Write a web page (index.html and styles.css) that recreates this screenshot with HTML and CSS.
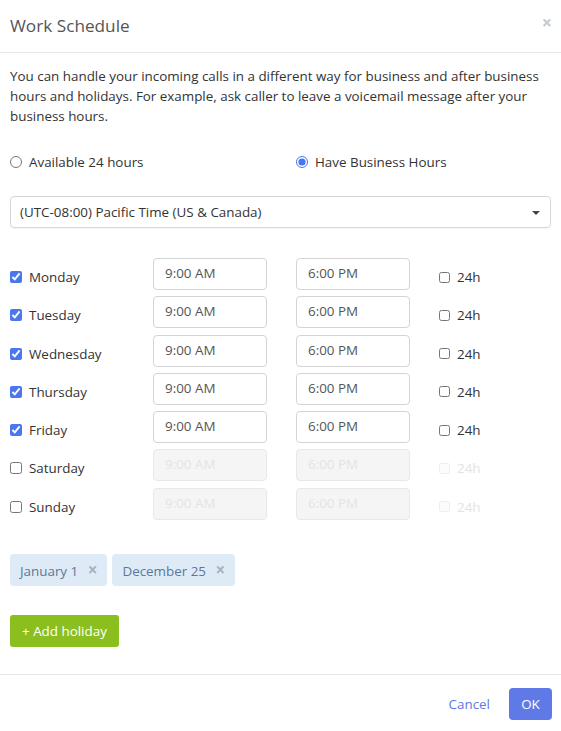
FILE: index.html
```html
<!DOCTYPE html>
<html>
<head>
<meta charset="utf-8">
<link rel="stylesheet" href="styles.css">
</head>
<body>
<div class="modal">
  <div class="modal-header">
    <h1 class="title">Work Schedule</h1>
    <span class="close">&times;</span>
  </div>
  <div class="modal-body">
    <p class="intro">You can handle your incoming calls in a different way for business and after business hours and holidays. For example, ask caller to leave a voicemail message after your business hours.</p>
    <div class="radios">
      <label class="radio"><input type="radio" name="mode"> Available 24 hours</label>
      <label class="radio"><input type="radio" name="mode" checked> Have Business Hours</label>
    </div>
    <div class="select">
      <span>(UTC-08:00) Pacific Time (US &amp; Canada)</span>
      <span class="caret"></span>
    </div>
    <div class="days">
      <label class="day"><input type="checkbox" checked> Monday</label>
      <div class="time">9:00 AM</div><div class="time">6:00 PM</div>
      <label class="h24"><input type="checkbox"> 24h</label>

      <label class="day"><input type="checkbox" checked> Tuesday</label>
      <div class="time">9:00 AM</div><div class="time">6:00 PM</div>
      <label class="h24"><input type="checkbox"> 24h</label>

      <label class="day"><input type="checkbox" checked> Wednesday</label>
      <div class="time">9:00 AM</div><div class="time">6:00 PM</div>
      <label class="h24"><input type="checkbox"> 24h</label>

      <label class="day"><input type="checkbox" checked> Thursday</label>
      <div class="time">9:00 AM</div><div class="time">6:00 PM</div>
      <label class="h24"><input type="checkbox"> 24h</label>

      <label class="day"><input type="checkbox" checked> Friday</label>
      <div class="time">9:00 AM</div><div class="time">6:00 PM</div>
      <label class="h24"><input type="checkbox"> 24h</label>

      <label class="day"><input type="checkbox"> Saturday</label>
      <div class="time disabled">9:00 AM</div><div class="time disabled">6:00 PM</div>
      <label class="h24 disabled"><input type="checkbox" disabled> 24h</label>

      <label class="day"><input type="checkbox"> Sunday</label>
      <div class="time disabled">9:00 AM</div><div class="time disabled">6:00 PM</div>
      <label class="h24 disabled"><input type="checkbox" disabled> 24h</label>
    </div>
    <div class="tags">
      <span class="tag">January 1 <span class="x">&times;</span></span>
      <span class="tag">December 25 <span class="x">&times;</span></span>
    </div>
    <button class="add">+ Add holiday</button>
  </div>
  <div class="modal-footer">
    <button class="cancel">Cancel</button>
    <button class="ok">OK</button>
  </div>
</div>
</body>
</html>
```
FILE: styles.css
```css
* { box-sizing: border-box; }
html, body { margin: 0; padding: 0; background: #fff; }
body {
  font-family: "Open Sans", "Liberation Sans", sans-serif;
  font-size: 13.4px;
  color: #333;
}
.modal { width: 561px; }
.modal-header {
  height: 53px;
  border-bottom: 1px solid #e8e8e8;
  display: flex;
  align-items: flex-start;
  justify-content: space-between;
  padding: 14px 10px 0 10px;
}
.title {
  margin: 0;
  font-size: 17.2px;
  font-weight: 400;
  color: #555;
  line-height: 24px;
}
.close {
  color: #c8c8c8;
  font-size: 18px;
  font-weight: 700;
  line-height: 16px;
  margin-top: 0;
  margin-right: -1px;
}
.modal-body { padding: 13px 10px 27px 10px; }
.intro {
  margin: 0;
  line-height: 20px;
}
.radios {
  display: grid;
  grid-template-columns: 286px 1fr;
  margin-top: 26px;
  height: 20px;
}
.radio {
  display: flex;
  align-items: center;
  gap: 7px;
  line-height: 20px;
}
input[type=radio], input[type=checkbox] {
  margin: 0;
  width: 12px;
  height: 12px;
  accent-color: #4a77f0;
}
.select {
  margin-top: 24px;
  height: 32px;
  border: 1px solid #d6d6d6;
  border-radius: 4px;
  display: flex;
  align-items: center;
  justify-content: space-between;
  padding: 0 10px 0 9px;
  box-shadow: 0 1px 1px rgba(0,0,0,0.04);
}
.caret {
  width: 0; height: 0;
  border-left: 4px solid transparent;
  border-right: 4px solid transparent;
  border-top: 4px solid #444;
  margin-top: 1px;
}
.days {
  margin-top: 30px;
  display: grid;
  grid-template-columns: 114px 114px 114px auto;
  column-gap: 29px;
  row-gap: 6.3px;
}
.day, .h24 {
  display: flex;
  align-items: center;
  gap: 7px;
  line-height: 20px;
  margin-top: 9px;
  align-self: start;
}
.day input { width: 12px; height: 12px; }
.h24 { margin-left: 0; }
.h24 input { width: 11px; height: 11px; }
.h24.disabled { color: #e3e3e3; }
.h24.disabled input { opacity: 0.35; }
.time {
  height: 32px;
  border: 1px solid #d4d4d4;
  border-radius: 4px;
  padding: 4px 0 0 11px;
  line-height: 20px;
  color: #555;
}
.time.disabled {
  background: #f5f5f5;
  border-color: #e8e8e8;
  color: #e4e4e4;
}
.tags {
  margin-top: 34px;
  display: flex;
  gap: 5px;
}
.tag {
  height: 32px;
  line-height: 32px;
  background: #deebf7;
  color: #5b7898;
  border-radius: 4px;
  padding: 0 10px 0 10px;
}
.tag .x {
  color: #a9b2bc;
  font-size: 17px;
  font-weight: 700;
  margin-left: 6px;
}
.add {
  margin-top: 29px;
  height: 32px;
  padding: 0 12px;
  background: #8bbf1f;
  color: #fff;
  border: none;
  border-radius: 3px;
  font-family: inherit;
  font-size: 13.4px;
}
.modal-footer {
  border-top: 1px solid #e8e8e8;
  padding: 13px 9px 0 0;
  display: flex;
  justify-content: flex-end;
  align-items: center;
  gap: 19px;
}
.cancel {
  background: none;
  border: none;
  padding: 0;
  color: #5e79e6;
  font-family: inherit;
  font-size: 13.4px;
}
.ok {
  width: 43px;
  height: 32px;
  background: #5f7ae6;
  color: #fff;
  border: none;
  border-radius: 4px;
  font-family: inherit;
  font-size: 13.4px;
  padding: 0;
}
```
